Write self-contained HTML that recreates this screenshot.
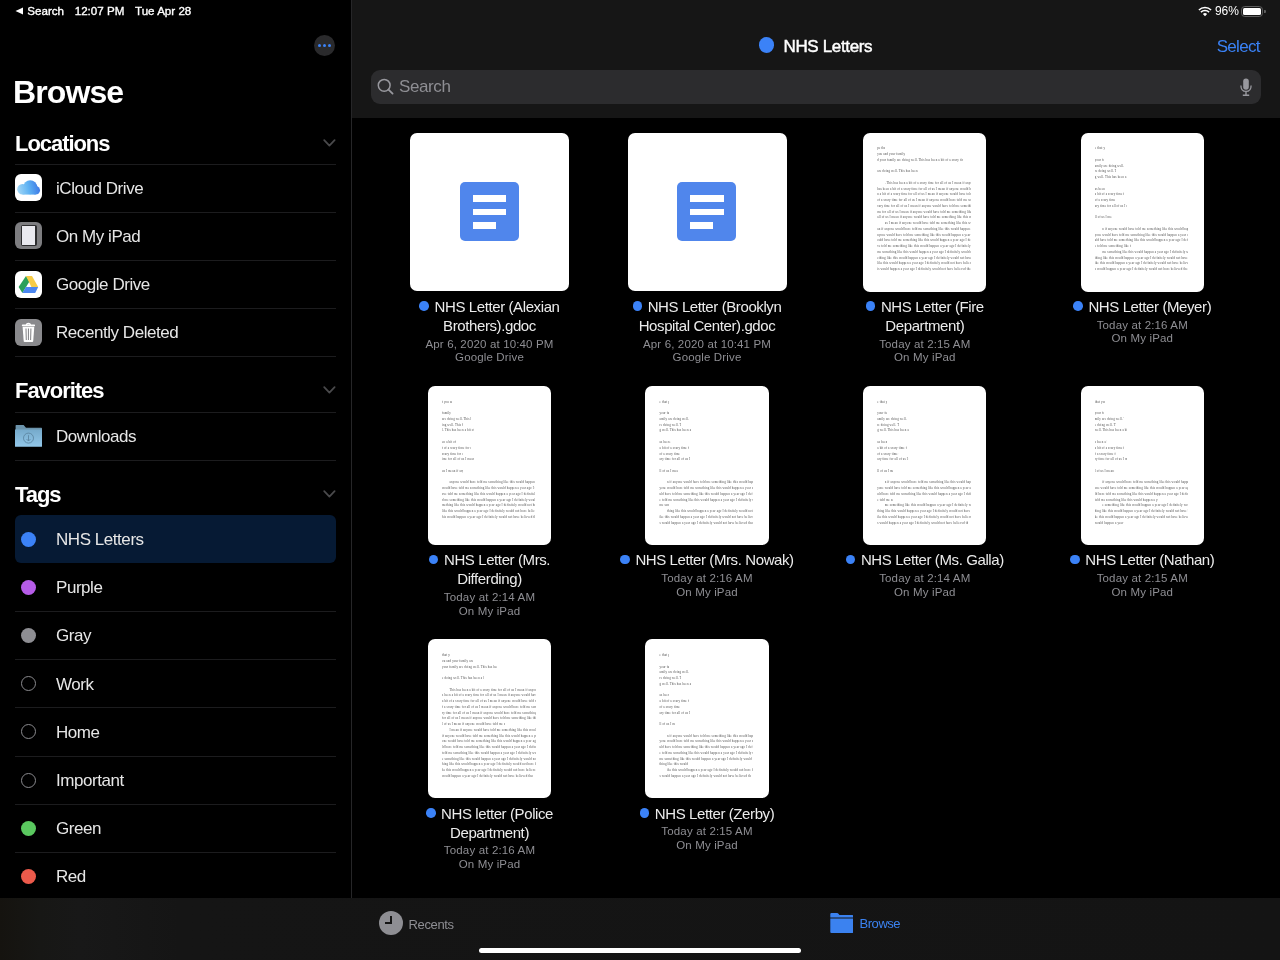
<!DOCTYPE html>
<html><head><meta charset="utf-8"><style>
*{margin:0;padding:0;box-sizing:border-box}
html,body{width:1280px;height:960px;overflow:hidden;background:#000;font-family:"Liberation Sans",sans-serif;color:#fff}
div{position:absolute}
svg{display:block}
#root{left:0;top:0;width:1280px;height:960px;will-change:transform}
.t{white-space:nowrap;line-height:1}
#divider{left:351px;top:0;width:1px;height:898px;background:#262628}
#mainhdr{left:352px;top:0;width:928px;height:118px;background:#161616}
#tabbar{left:0;top:898px;width:1280px;height:62px;background:linear-gradient(90deg,#15130f 0px,#171715 40px,#181818 80px,#151515 180px,#141414 1280px)}
.sep{left:15px;width:321px;height:1px;background:#1c1c1e}
.row{left:56px;font-size:17px;letter-spacing:-0.45px;color:#e6e6e6}
.ico{left:15px;width:27px;height:27px;border-radius:6px;overflow:hidden}
.dot{left:21px;width:15px;height:15px;border-radius:50%}
.ring{left:21px;width:15px;height:15px;border-radius:50%;border:1.3px solid #8a8a8e}
.sec{left:15px;font-size:22px;font-weight:bold;letter-spacing:-1.05px}
.chev{left:322px;width:15px;height:9px}
.thumb{background:#fff;border-radius:7px;overflow:hidden}
.ln{height:5px;overflow:hidden;white-space:nowrap;font-family:'Liberation Serif',serif;font-size:3.1px;line-height:5px;color:#505050;letter-spacing:0.15px}
.lbl{font-size:15px;letter-spacing:-0.4px;color:#ebebeb;text-align:center}
.sub{font-size:11.5px;letter-spacing:0.15px;color:#8e8e93;text-align:center}
</style></head><body><div id="root">
<div class="t" style="left:15px;top:7px;width:9px;height:8px"><svg width="9" height="8"><path d="M0.5 4 L8 0.5 L8 7.5Z" fill="#fff"/></svg></div>
<div class="t" style="left:27.3px;top:5.08px;font-size:11.6px;letter-spacing:0px;-webkit-text-stroke:0.35px #fff">Search</div>
<div class="t" style="left:74.7px;top:5.08px;font-size:11.6px;letter-spacing:0px;-webkit-text-stroke:0.35px #fff">12:07 PM</div>
<div class="t" style="left:135px;top:5.08px;font-size:11.6px;letter-spacing:0px;-webkit-text-stroke:0.35px #fff">Tue Apr 28</div>
<div style="left:314px;top:35px;width:21px;height:21px;border-radius:50%;background:#2a2a2c"></div>
<div style="left:317.9px;top:44.1px;width:3.4px;height:3.4px;border-radius:50%;background:#3b82f6"></div>
<div style="left:322.9px;top:44.1px;width:3.4px;height:3.4px;border-radius:50%;background:#3b82f6"></div>
<div style="left:327.9px;top:44.1px;width:3.4px;height:3.4px;border-radius:50%;background:#3b82f6"></div>
<div class="t" style="left:13px;top:75.91px;font-size:32px;font-weight:bold;letter-spacing:-0.9px">Browse</div>
<div class="t sec" style="top:132.98px">Locations</div>
<div class="chev" style="top:139.2px"><svg width="15" height="9"><path d="M2.2 1.2 L7.4 6.6 L12.6 1.2" stroke="#4a4a4c" stroke-width="1.7" fill="none" stroke-linecap="round" stroke-linejoin="round"/></svg></div>
<div class="sep" style="top:164px"></div>
<div class="sep" style="top:212px"></div>
<div class="sep" style="top:260px"></div>
<div class="sep" style="top:308px"></div>
<div class="sep" style="top:356px"></div>
<div class="ico" style="top:174px;background:#fff"><svg width="27" height="27" viewBox="0 0 27 27"><defs><linearGradient id="cg" gradientUnits="userSpaceOnUse" x1="2" y1="17" x2="25.5" y2="12"><stop offset="0" stop-color="#a6d9f6"/><stop offset="0.5" stop-color="#5eb2f3"/><stop offset="1" stop-color="#3a72e4"/></linearGradient></defs><g fill="url(#cg)"><circle cx="7.5" cy="15.2" r="5.3"/><circle cx="15.2" cy="13.3" r="7"/><circle cx="20.7" cy="16.3" r="4.3"/><rect x="7.5" y="15" width="13.2" height="5.6"/></g></svg></div>
<div class="t row" style="top:179.81px">iCloud Drive</div>
<div class="ico" style="top:222px;background:#7d7d80"><div style="left:5.5px;top:3px;width:16px;height:21px;background:#2c2c2e;border-radius:2px"></div><div style="left:7px;top:4.4px;width:13px;height:18.2px;background:#e9e9ef"></div></div>
<div class="t row" style="top:227.81px">On My iPad</div>
<div class="ico" style="top:271px;background:#fff"><svg width="27" height="27" viewBox="0 0 27 27"><path d="M11 5 L14.4 10.6 L7.4 21.9 L3.6 16.1 Z" fill="#2aa05a"/><path d="M11 5 L17 5 L23.2 16.1 L16.4 16.1 Z" fill="#f7cc47"/><path d="M7.4 21.9 L10.8 16.1 L23.2 16.1 L20.2 21.9 Z" fill="#4b86f0"/></svg></div>
<div class="t row" style="top:275.81px">Google Drive</div>
<div class="ico" style="top:319px;background:#8a8a8d"><svg width="27" height="27" viewBox="0 0 27 27"><path d="M7.6 6.4 H19.3" stroke="#fff" stroke-width="1.6" stroke-linecap="round"/><path d="M11.3 6.2 C11.5 4.9 12.3 4.5 13.4 4.5 C14.5 4.5 15.3 4.9 15.5 6.2" stroke="#fff" stroke-width="1.3" fill="none"/><path d="M7.6 7.7 L19.3 7.7 L18.2 22.3 C18.15 22.8 17.8 23.1 17.3 23.1 L9.6 23.1 C9.1 23.1 8.75 22.8 8.7 22.3 Z" fill="#fff"/><path d="M11.0 9.6 L11.3 21.1 M13.45 9.6 V21.1 M15.9 9.6 L15.6 21.1" stroke="#8a8a8d" stroke-width="1.1"/></svg></div>
<div class="t row" style="top:323.81px">Recently Deleted</div>
<div class="t sec" style="top:380.18px">Favorites</div>
<div class="chev" style="top:386.4px"><svg width="15" height="9"><path d="M2.2 1.2 L7.4 6.6 L12.6 1.2" stroke="#4a4a4c" stroke-width="1.7" fill="none" stroke-linecap="round" stroke-linejoin="round"/></svg></div>
<div class="sep" style="top:412px"></div>
<div class="sep" style="top:460px"></div>
<div class="ico" style="top:424px;height:23px;border-radius:0"><svg width="27" height="23" viewBox="0 0 27 23"><defs><linearGradient id="fg" x1="0" y1="0" x2="0" y2="1"><stop offset="0" stop-color="#76aacb"/><stop offset="1" stop-color="#93c8ea"/></linearGradient></defs><path d="M0.6 1.6 Q0.6 1 1.2 1 L8.6 1 L11 3.8 L26.4 3.8 Q27 3.8 27 4.4 L27 8 L0.6 8 Z" fill="#6b93ab"/><path d="M0 5.6 L27 5.6 L27 22.3 Q27 22.8 26.4 22.8 L0.6 22.8 Q0 22.8 0 22.3 Z" fill="url(#fg)"/><circle cx="13.5" cy="14.1" r="5" stroke="#5c87a3" stroke-width="0.9" fill="none"/><path d="M13.5 11.2 V17 M11.6 15.1 L13.5 17 L15.4 15.1" stroke="#5c87a3" stroke-width="0.9" fill="none"/></svg></div>
<div class="t row" style="top:427.81px">Downloads</div>
<div class="t sec" style="top:483.58px">Tags</div>
<div class="chev" style="top:489.8px"><svg width="15" height="9"><path d="M2.2 1.2 L7.4 6.6 L12.6 1.2" stroke="#4a4a4c" stroke-width="1.7" fill="none" stroke-linecap="round" stroke-linejoin="round"/></svg></div>
<div style="left:15px;top:515px;width:321px;height:48px;border-radius:6px;background:#061a34"></div>
<div class="sep" style="top:611px"></div>
<div class="sep" style="top:659px"></div>
<div class="sep" style="top:707px"></div>
<div class="sep" style="top:756px"></div>
<div class="sep" style="top:804px"></div>
<div class="sep" style="top:852px"></div>
<div class="dot" style="top:531.5px;background:#3b82f7"></div>
<div class="t row" style="top:531.01px">NHS Letters</div>
<div class="dot" style="top:579.7px;background:#b65ce8"></div>
<div class="t row" style="top:579.21px">Purple</div>
<div class="dot" style="top:627.9px;background:#8e8e93"></div>
<div class="t row" style="top:627.41px">Gray</div>
<div class="ring" style="top:676.1px"></div>
<div class="t row" style="top:675.61px">Work</div>
<div class="ring" style="top:724.3px"></div>
<div class="t row" style="top:723.81px">Home</div>
<div class="ring" style="top:772.5px"></div>
<div class="t row" style="top:772.01px">Important</div>
<div class="dot" style="top:820.7px;background:#5ac85f"></div>
<div class="t row" style="top:820.21px">Green</div>
<div class="dot" style="top:868.9px;background:#ec5a4b"></div>
<div class="t row" style="top:868.41px">Red</div>
<div id="divider"></div>
<div id="mainhdr"></div>
<div style="left:1198px;top:6px;width:14px;height:11px"><svg width="14" height="11" viewBox="0 0 14 11"><path d="M7 10.3 L4.9 8.1 A3 3 0 0 1 9.1 8.1 Z" fill="#fff"/><path d="M2.9 6.1 A5.8 5.8 0 0 1 11.1 6.1" stroke="#fff" stroke-width="1.5" fill="none"/><path d="M0.9 4 A8.6 8.6 0 0 1 13.1 4" stroke="#fff" stroke-width="1.5" fill="none"/></svg></div>
<div class="t" style="left:1215px;top:4.64px;font-size:12px;letter-spacing:-0.1px">96%</div>
<div style="left:1241.3px;top:5.5px;width:22.2px;height:11.5px;border:1.4px solid #5e5e5e;border-radius:3.8px"></div>
<div style="left:1243.2px;top:7.6px;width:18px;height:7.2px;background:#fff;border-radius:1.5px"></div>
<div style="left:1264px;top:9.5px;width:2.2px;height:3.8px;background:#5e5e5e;border-radius:0 1px 1px 0"></div>
<div style="left:759px;top:37.3px;width:15.3px;height:15.3px;border-radius:50%;background:#3b82f7"></div>
<div class="t" style="left:783.5px;top:37.91px;font-size:17px;letter-spacing:-0.35px;-webkit-text-stroke:0.45px #fff">NHS Letters</div>
<div class="t" style="left:1216.7px;top:38.01px;font-size:17px;letter-spacing:-0.7px;color:#3a82f6">Select</div>
<div style="left:371px;top:70px;width:890px;height:34px;border-radius:9px;background:#2c2c2e"></div>
<div style="left:376px;top:77px;width:18px;height:18px"><svg width="18" height="18" viewBox="0 0 18 18"><circle cx="8.2" cy="8.3" r="5.9" stroke="#98989e" stroke-width="1.5" fill="none"/><path d="M12.5 12.6 L16.6 16.6" stroke="#98989e" stroke-width="1.8" stroke-linecap="round"/></svg></div>
<div class="t" style="left:399px;top:77.61px;font-size:17px;letter-spacing:-0.4px;color:#8e8e93">Search</div>
<div style="left:1238px;top:77px;width:16px;height:20px"><svg width="16" height="20" viewBox="0 0 16 20"><rect x="5.2" y="1.6" width="5.6" height="11.2" rx="2.8" fill="#98989e"/><path d="M2.9 8.4 Q2.9 14.4 8 14.4 Q13.1 14.4 13.1 8.4" stroke="#98989e" stroke-width="1.3" fill="none"/><path d="M8 14.4 V17.8 M4.8 18.2 H11.2" stroke="#98989e" stroke-width="1.4"/></svg></div>
<div style="left:352px;top:118px;width:928px;height:780px;background:#000"></div>
<div class="thumb" style="left:410.0px;top:132.5px;width:159px;height:158.5px"><div style="left:49.6px;top:49.4px;width:59.4px;height:59.4px;border-radius:5px;background:#5086ec"></div><div style="left:62.6px;top:62.5px;width:33.7px;height:6.8px;background:#fff"></div><div style="left:62.6px;top:76.2px;width:33.7px;height:6.8px;background:#fff"></div><div style="left:62.6px;top:89.3px;width:23.4px;height:6.8px;background:#fff"></div></div>
<div class="t lbl" style="left:384.5px;top:298.80px;width:210px"><span style="display:inline-block;width:9.6px;height:9.6px;border-radius:50%;background:#3b82f7;margin-right:5.5px;vertical-align:0.8px"></span>NHS Letter (Alexian</div>
<div class="t lbl" style="left:384.5px;top:317.80px;width:210px">Brothers).gdoc</div>
<div class="t sub" style="left:384.5px;top:338.67px;width:210px">Apr 6, 2020 at 10:40 PM</div>
<div class="t sub" style="left:384.5px;top:352.27px;width:210px">Google Drive</div>
<div class="thumb" style="left:627.5px;top:132.5px;width:159px;height:158.5px"><div style="left:49.6px;top:49.4px;width:59.4px;height:59.4px;border-radius:5px;background:#5086ec"></div><div style="left:62.6px;top:62.5px;width:33.7px;height:6.8px;background:#fff"></div><div style="left:62.6px;top:76.2px;width:33.7px;height:6.8px;background:#fff"></div><div style="left:62.6px;top:89.3px;width:23.4px;height:6.8px;background:#fff"></div></div>
<div class="t lbl" style="left:602.0px;top:298.80px;width:210px"><span style="display:inline-block;width:9.6px;height:9.6px;border-radius:50%;background:#3b82f7;margin-right:5.5px;vertical-align:0.8px"></span>NHS Letter (Brooklyn</div>
<div class="t lbl" style="left:602.0px;top:317.80px;width:210px">Hospital Center).gdoc</div>
<div class="t sub" style="left:602.0px;top:338.67px;width:210px">Apr 6, 2020 at 10:41 PM</div>
<div class="t sub" style="left:602.0px;top:352.27px;width:210px">Google Drive</div>
<div class="thumb" style="left:863.0px;top:132.5px;width:123.4px;height:159px"><div class="ln" style="left:14.2px;top:13.9px;width:8.0px">pe that you and your family are doing well. This has been a bit of a scary time for all of us I mean if anyone would have told me something like this would happen a year ago I definitely would not have believed them. However I think that there has been some level of good to come out of this with this whole quarantine thing we have all been given time to reflect on our lives and to spend time with our families and to really think about what matters</div><div class="ln" style="left:14.2px;top:19.6px;width:29.0px"> you and your family are doing well. This has been a bit of a scary time for all of us I mean if anyone would have told me something like this would happen a year ago I definitely would not have believed them. However I think that there has been some level of good to come out of this with this whole quarantine thing we have all been given time to reflect on our lives and to spend time with our families and to really think about what matters</div><div class="ln" style="left:14.2px;top:25.4px;width:86.0px">d your family are doing well. This has been a bit of a scary time for all of us I mean if anyone would have told me something like this would happen a year ago I definitely would not have believed them. However I think that there has been some level of good to come out of this with this whole quarantine thing we have all been given time to reflect on our lives and to spend time with our families and to really think about what matters</div><div class="ln" style="left:14.2px;top:36.9px;width:40.5px">are doing well. This has been a bit of a scary time for all of us I mean if anyone would have told me something like this would happen a year ago I definitely would not have believed them. However I think that there has been some level of good to come out of this with this whole quarantine thing we have all been given time to reflect on our lives and to spend time with our families and to really think about what matters</div><div class="ln" style="left:21.7px;top:48.4px;width:86.5px">. This has been a bit of a scary time for all of us I mean if anyone would have told me something like this would happen a year ago I definitely would not have believed them. However I think that there has been some level of good to come out of this with this whole quarantine thing we have all been given time to reflect on our lives and to spend time with our families and to really think about what matters</div><div class="ln" style="left:14.2px;top:54.1px;width:94.0px">has been a bit of a scary time for all of us I mean if anyone would have told me something like this would happen a year ago I definitely would not have believed them. However I think that there has been some level of good to come out of this with this whole quarantine thing we have all been given time to reflect on our lives and to spend time with our families and to really think about what matters</div><div class="ln" style="left:14.2px;top:59.9px;width:94.0px">n a bit of a scary time for all of us I mean if anyone would have told me something like this would happen a year ago I definitely would not have believed them. However I think that there has been some level of good to come out of this with this whole quarantine thing we have all been given time to reflect on our lives and to spend time with our families and to really think about what matters</div><div class="ln" style="left:14.2px;top:65.7px;width:94.0px"> of a scary time for all of us I mean if anyone would have told me something like this would happen a year ago I definitely would not have believed them. However I think that there has been some level of good to come out of this with this whole quarantine thing we have all been given time to reflect on our lives and to spend time with our families and to really think about what matters</div><div class="ln" style="left:14.2px;top:71.4px;width:94.0px">cary time for all of us I mean if anyone would have told me something like this would happen a year ago I definitely would not have believed them. However I think that there has been some level of good to come out of this with this whole quarantine thing we have all been given time to reflect on our lives and to spend time with our families and to really think about what matters</div><div class="ln" style="left:14.2px;top:77.2px;width:94.0px">me for all of us I mean if anyone would have told me something like this would happen a year ago I definitely would not have believed them. However I think that there has been some level of good to come out of this with this whole quarantine thing we have all been given time to reflect on our lives and to spend time with our families and to really think about what matters</div><div class="ln" style="left:14.2px;top:82.9px;width:94.0px">all of us I mean if anyone would have told me something like this would happen a year ago I definitely would not have believed them. However I think that there has been some level of good to come out of this with this whole quarantine thing we have all been given time to reflect on our lives and to spend time with our families and to really think about what matters</div><div class="ln" style="left:21.7px;top:88.7px;width:86.5px">us I mean if anyone would have told me something like this would happen a year ago I definitely would not have believed them. However I think that there has been some level of good to come out of this with this whole quarantine thing we have all been given time to reflect on our lives and to spend time with our families and to really think about what matters</div><div class="ln" style="left:14.2px;top:94.4px;width:94.0px">an if anyone would have told me something like this would happen a year ago I definitely would not have believed them. However I think that there has been some level of good to come out of this with this whole quarantine thing we have all been given time to reflect on our lives and to spend time with our families and to really think about what matters</div><div class="ln" style="left:14.2px;top:100.2px;width:94.0px">nyone would have told me something like this would happen a year ago I definitely would not have believed them. However I think that there has been some level of good to come out of this with this whole quarantine thing we have all been given time to reflect on our lives and to spend time with our families and to really think about what matters</div><div class="ln" style="left:14.2px;top:105.9px;width:94.0px">ould have told me something like this would happen a year ago I definitely would not have believed them. However I think that there has been some level of good to come out of this with this whole quarantine thing we have all been given time to reflect on our lives and to spend time with our families and to really think about what matters</div><div class="ln" style="left:14.2px;top:111.7px;width:94.0px">ve told me something like this would happen a year ago I definitely would not have believed them. However I think that there has been some level of good to come out of this with this whole quarantine thing we have all been given time to reflect on our lives and to spend time with our families and to really think about what matters</div><div class="ln" style="left:14.2px;top:117.4px;width:94.0px"> me something like this would happen a year ago I definitely would not have believed them. However I think that there has been some level of good to come out of this with this whole quarantine thing we have all been given time to reflect on our lives and to spend time with our families and to really think about what matters</div><div class="ln" style="left:14.2px;top:123.2px;width:94.0px">ething like this would happen a year ago I definitely would not have believed them. However I think that there has been some level of good to come out of this with this whole quarantine thing we have all been given time to reflect on our lives and to spend time with our families and to really think about what matters</div><div class="ln" style="left:14.2px;top:128.9px;width:94.0px">like this would happen a year ago I definitely would not have believed them. However I think that there has been some level of good to come out of this with this whole quarantine thing we have all been given time to reflect on our lives and to spend time with our families and to really think about what matters</div><div class="ln" style="left:14.2px;top:134.7px;width:94.0px">is would happen a year ago I definitely would not have believed them. However I think that there has been some level of good to come out of this with this whole quarantine thing we have all been given time to reflect on our lives and to spend time with our families and to really think about what matters</div></div>
<div class="t lbl" style="left:819.8px;top:298.80px;width:210px"><span style="display:inline-block;width:9.6px;height:9.6px;border-radius:50%;background:#3b82f7;margin-right:5.5px;vertical-align:0.8px"></span>NHS Letter (Fire</div>
<div class="t lbl" style="left:819.8px;top:317.80px;width:210px">Department)</div>
<div class="t sub" style="left:819.8px;top:338.67px;width:210px">Today at 2:15 AM</div>
<div class="t sub" style="left:819.8px;top:352.27px;width:210px">On My iPad</div>
<div class="thumb" style="left:1080.6px;top:132.5px;width:123.4px;height:159px"><div class="ln" style="left:14.2px;top:13.9px;width:10.0px">e that you and your family are doing well. This has been a bit of a scary time for all of us I mean if anyone would have told me something like this would happen a year ago I definitely would not have believed them. However I think that there has been some level of good to come out of this with this whole quarantine thing we have all been given time to reflect on our lives and to spend time with our families and to really think about what matters</div><div class="ln" style="left:14.2px;top:25.4px;width:9.5px"> your family are doing well. This has been a bit of a scary time for all of us I mean if anyone would have told me something like this would happen a year ago I definitely would not have believed them. However I think that there has been some level of good to come out of this with this whole quarantine thing we have all been given time to reflect on our lives and to spend time with our families and to really think about what matters</div><div class="ln" style="left:14.2px;top:31.1px;width:29.5px">amily are doing well. This has been a bit of a scary time for all of us I mean if anyone would have told me something like this would happen a year ago I definitely would not have believed them. However I think that there has been some level of good to come out of this with this whole quarantine thing we have all been given time to reflect on our lives and to spend time with our families and to really think about what matters</div><div class="ln" style="left:14.2px;top:36.9px;width:21.5px">re doing well. This has been a bit of a scary time for all of us I mean if anyone would have told me something like this would happen a year ago I definitely would not have believed them. However I think that there has been some level of good to come out of this with this whole quarantine thing we have all been given time to reflect on our lives and to spend time with our families and to really think about what matters</div><div class="ln" style="left:14.2px;top:42.6px;width:32.0px">g well. This has been a bit of a scary time for all of us I mean if anyone would have told me something like this would happen a year ago I definitely would not have believed them. However I think that there has been some level of good to come out of this with this whole quarantine thing we have all been given time to reflect on our lives and to spend time with our families and to really think about what matters</div><div class="ln" style="left:14.2px;top:54.1px;width:11.0px">as been a bit of a scary time for all of us I mean if anyone would have told me something like this would happen a year ago I definitely would not have believed them. However I think that there has been some level of good to come out of this with this whole quarantine thing we have all been given time to reflect on our lives and to spend time with our families and to really think about what matters</div><div class="ln" style="left:14.2px;top:59.9px;width:29.5px"> a bit of a scary time for all of us I mean if anyone would have told me something like this would happen a year ago I definitely would not have believed them. However I think that there has been some level of good to come out of this with this whole quarantine thing we have all been given time to reflect on our lives and to spend time with our families and to really think about what matters</div><div class="ln" style="left:14.2px;top:65.7px;width:21.5px">of a scary time for all of us I mean if anyone would have told me something like this would happen a year ago I definitely would not have believed them. However I think that there has been some level of good to come out of this with this whole quarantine thing we have all been given time to reflect on our lives and to spend time with our families and to really think about what matters</div><div class="ln" style="left:14.2px;top:71.4px;width:32.0px">ary time for all of us I mean if anyone would have told me something like this would happen a year ago I definitely would not have believed them. However I think that there has been some level of good to come out of this with this whole quarantine thing we have all been given time to reflect on our lives and to spend time with our families and to really think about what matters</div><div class="ln" style="left:14.2px;top:82.9px;width:17.0px">ll of us I mean if anyone would have told me something like this would happen a year ago I definitely would not have believed them. However I think that there has been some level of good to come out of this with this whole quarantine thing we have all been given time to reflect on our lives and to spend time with our families and to really think about what matters</div><div class="ln" style="left:21.7px;top:94.4px;width:86.0px">n if anyone would have told me something like this would happen a year ago I definitely would not have believed them. However I think that there has been some level of good to come out of this with this whole quarantine thing we have all been given time to reflect on our lives and to spend time with our families and to really think about what matters</div><div class="ln" style="left:14.2px;top:100.2px;width:93.5px">yone would have told me something like this would happen a year ago I definitely would not have believed them. However I think that there has been some level of good to come out of this with this whole quarantine thing we have all been given time to reflect on our lives and to spend time with our families and to really think about what matters</div><div class="ln" style="left:14.2px;top:105.9px;width:93.5px">uld have told me something like this would happen a year ago I definitely would not have believed them. However I think that there has been some level of good to come out of this with this whole quarantine thing we have all been given time to reflect on our lives and to spend time with our families and to really think about what matters</div><div class="ln" style="left:14.2px;top:111.7px;width:36.5px">e told me something like this would happen a year ago I definitely would not have believed them. However I think that there has been some level of good to come out of this with this whole quarantine thing we have all been given time to reflect on our lives and to spend time with our families and to really think about what matters</div><div class="ln" style="left:21.7px;top:117.4px;width:86.0px">me something like this would happen a year ago I definitely would not have believed them. However I think that there has been some level of good to come out of this with this whole quarantine thing we have all been given time to reflect on our lives and to spend time with our families and to really think about what matters</div><div class="ln" style="left:14.2px;top:123.2px;width:93.5px">thing like this would happen a year ago I definitely would not have believed them. However I think that there has been some level of good to come out of this with this whole quarantine thing we have all been given time to reflect on our lives and to spend time with our families and to really think about what matters</div><div class="ln" style="left:14.2px;top:128.9px;width:93.5px">ike this would happen a year ago I definitely would not have believed them. However I think that there has been some level of good to come out of this with this whole quarantine thing we have all been given time to reflect on our lives and to spend time with our families and to really think about what matters</div><div class="ln" style="left:14.2px;top:134.7px;width:93.5px">s would happen a year ago I definitely would not have believed them. However I think that there has been some level of good to come out of this with this whole quarantine thing we have all been given time to reflect on our lives and to spend time with our families and to really think about what matters</div></div>
<div class="t lbl" style="left:1037.3px;top:298.80px;width:210px"><span style="display:inline-block;width:9.6px;height:9.6px;border-radius:50%;background:#3b82f7;margin-right:5.5px;vertical-align:0.8px"></span>NHS Letter (Meyer)</div>
<div class="t sub" style="left:1037.3px;top:319.67px;width:210px">Today at 2:16 AM</div>
<div class="t sub" style="left:1037.3px;top:333.27px;width:210px">On My iPad</div>
<div class="thumb" style="left:427.8px;top:385.9px;width:123.4px;height:159px"><div class="ln" style="left:14.2px;top:13.9px;width:10.0px">t you and your family are doing well. This has been a bit of a scary time for all of us I mean if anyone would have told me something like this would happen a year ago I definitely would not have believed them. However I think that there has been some level of good to come out of this with this whole quarantine thing we have all been given time to reflect on our lives and to spend time with our families and to really think about what matters</div><div class="ln" style="left:14.2px;top:25.4px;width:9.5px"> family are doing well. This has been a bit of a scary time for all of us I mean if anyone would have told me something like this would happen a year ago I definitely would not have believed them. However I think that there has been some level of good to come out of this with this whole quarantine thing we have all been given time to reflect on our lives and to spend time with our families and to really think about what matters</div><div class="ln" style="left:14.2px;top:31.1px;width:29.5px"> are doing well. This has been a bit of a scary time for all of us I mean if anyone would have told me something like this would happen a year ago I definitely would not have believed them. However I think that there has been some level of good to come out of this with this whole quarantine thing we have all been given time to reflect on our lives and to spend time with our families and to really think about what matters</div><div class="ln" style="left:14.2px;top:36.9px;width:21.5px">ing well. This has been a bit of a scary time for all of us I mean if anyone would have told me something like this would happen a year ago I definitely would not have believed them. However I think that there has been some level of good to come out of this with this whole quarantine thing we have all been given time to reflect on our lives and to spend time with our families and to really think about what matters</div><div class="ln" style="left:14.2px;top:42.6px;width:32.0px">l. This has been a bit of a scary time for all of us I mean if anyone would have told me something like this would happen a year ago I definitely would not have believed them. However I think that there has been some level of good to come out of this with this whole quarantine thing we have all been given time to reflect on our lives and to spend time with our families and to really think about what matters</div><div class="ln" style="left:14.2px;top:54.1px;width:14.0px">en a bit of a scary time for all of us I mean if anyone would have told me something like this would happen a year ago I definitely would not have believed them. However I think that there has been some level of good to come out of this with this whole quarantine thing we have all been given time to reflect on our lives and to spend time with our families and to really think about what matters</div><div class="ln" style="left:14.2px;top:59.9px;width:29.5px">t of a scary time for all of us I mean if anyone would have told me something like this would happen a year ago I definitely would not have believed them. However I think that there has been some level of good to come out of this with this whole quarantine thing we have all been given time to reflect on our lives and to spend time with our families and to really think about what matters</div><div class="ln" style="left:14.2px;top:65.7px;width:21.5px">scary time for all of us I mean if anyone would have told me something like this would happen a year ago I definitely would not have believed them. However I think that there has been some level of good to come out of this with this whole quarantine thing we have all been given time to reflect on our lives and to spend time with our families and to really think about what matters</div><div class="ln" style="left:14.2px;top:71.4px;width:32.0px">ime for all of us I mean if anyone would have told me something like this would happen a year ago I definitely would not have believed them. However I think that there has been some level of good to come out of this with this whole quarantine thing we have all been given time to reflect on our lives and to spend time with our families and to really think about what matters</div><div class="ln" style="left:14.2px;top:82.9px;width:21.0px"> us I mean if anyone would have told me something like this would happen a year ago I definitely would not have believed them. However I think that there has been some level of good to come out of this with this whole quarantine thing we have all been given time to reflect on our lives and to spend time with our families and to really think about what matters</div><div class="ln" style="left:21.7px;top:94.4px;width:86.0px">anyone would have told me something like this would happen a year ago I definitely would not have believed them. However I think that there has been some level of good to come out of this with this whole quarantine thing we have all been given time to reflect on our lives and to spend time with our families and to really think about what matters</div><div class="ln" style="left:14.2px;top:100.2px;width:93.5px">would have told me something like this would happen a year ago I definitely would not have believed them. However I think that there has been some level of good to come out of this with this whole quarantine thing we have all been given time to reflect on our lives and to spend time with our families and to really think about what matters</div><div class="ln" style="left:14.2px;top:105.9px;width:93.5px">ave told me something like this would happen a year ago I definitely would not have believed them. However I think that there has been some level of good to come out of this with this whole quarantine thing we have all been given time to reflect on our lives and to spend time with our families and to really think about what matters</div><div class="ln" style="left:14.2px;top:111.7px;width:93.5px">d me something like this would happen a year ago I definitely would not have believed them. However I think that there has been some level of good to come out of this with this whole quarantine thing we have all been given time to reflect on our lives and to spend time with our families and to really think about what matters</div><div class="ln" style="left:14.2px;top:117.4px;width:93.5px">mething like this would happen a year ago I definitely would not have believed them. However I think that there has been some level of good to come out of this with this whole quarantine thing we have all been given time to reflect on our lives and to spend time with our families and to really think about what matters</div><div class="ln" style="left:14.2px;top:123.2px;width:93.5px"> like this would happen a year ago I definitely would not have believed them. However I think that there has been some level of good to come out of this with this whole quarantine thing we have all been given time to reflect on our lives and to spend time with our families and to really think about what matters</div><div class="ln" style="left:14.2px;top:128.9px;width:93.5px">his would happen a year ago I definitely would not have believed them. However I think that there has been some level of good to come out of this with this whole quarantine thing we have all been given time to reflect on our lives and to spend time with our families and to really think about what matters</div></div>
<div class="t lbl" style="left:384.5px;top:552.20px;width:210px"><span style="display:inline-block;width:9.6px;height:9.6px;border-radius:50%;background:#3b82f7;margin-right:5.5px;vertical-align:0.8px"></span>NHS Letter (Mrs.</div>
<div class="t lbl" style="left:384.5px;top:571.20px;width:210px">Differding)</div>
<div class="t sub" style="left:384.5px;top:592.07px;width:210px">Today at 2:14 AM</div>
<div class="t sub" style="left:384.5px;top:605.67px;width:210px">On My iPad</div>
<div class="thumb" style="left:645.3px;top:385.9px;width:123.4px;height:159px"><div class="ln" style="left:14.2px;top:13.9px;width:10.0px">e that you and your family are doing well. This has been a bit of a scary time for all of us I mean if anyone would have told me something like this would happen a year ago I definitely would not have believed them. However I think that there has been some level of good to come out of this with this whole quarantine thing we have all been given time to reflect on our lives and to spend time with our families and to really think about what matters</div><div class="ln" style="left:14.2px;top:25.4px;width:9.5px"> your family are doing well. This has been a bit of a scary time for all of us I mean if anyone would have told me something like this would happen a year ago I definitely would not have believed them. However I think that there has been some level of good to come out of this with this whole quarantine thing we have all been given time to reflect on our lives and to spend time with our families and to really think about what matters</div><div class="ln" style="left:14.2px;top:31.1px;width:29.5px">amily are doing well. This has been a bit of a scary time for all of us I mean if anyone would have told me something like this would happen a year ago I definitely would not have believed them. However I think that there has been some level of good to come out of this with this whole quarantine thing we have all been given time to reflect on our lives and to spend time with our families and to really think about what matters</div><div class="ln" style="left:14.2px;top:36.9px;width:21.5px">re doing well. This has been a bit of a scary time for all of us I mean if anyone would have told me something like this would happen a year ago I definitely would not have believed them. However I think that there has been some level of good to come out of this with this whole quarantine thing we have all been given time to reflect on our lives and to spend time with our families and to really think about what matters</div><div class="ln" style="left:14.2px;top:42.6px;width:32.0px">g well. This has been a bit of a scary time for all of us I mean if anyone would have told me something like this would happen a year ago I definitely would not have believed them. However I think that there has been some level of good to come out of this with this whole quarantine thing we have all been given time to reflect on our lives and to spend time with our families and to really think about what matters</div><div class="ln" style="left:14.2px;top:54.1px;width:12.0px">as been a bit of a scary time for all of us I mean if anyone would have told me something like this would happen a year ago I definitely would not have believed them. However I think that there has been some level of good to come out of this with this whole quarantine thing we have all been given time to reflect on our lives and to spend time with our families and to really think about what matters</div><div class="ln" style="left:14.2px;top:59.9px;width:29.5px"> a bit of a scary time for all of us I mean if anyone would have told me something like this would happen a year ago I definitely would not have believed them. However I think that there has been some level of good to come out of this with this whole quarantine thing we have all been given time to reflect on our lives and to spend time with our families and to really think about what matters</div><div class="ln" style="left:14.2px;top:65.7px;width:21.5px">of a scary time for all of us I mean if anyone would have told me something like this would happen a year ago I definitely would not have believed them. However I think that there has been some level of good to come out of this with this whole quarantine thing we have all been given time to reflect on our lives and to spend time with our families and to really think about what matters</div><div class="ln" style="left:14.2px;top:71.4px;width:32.0px">ary time for all of us I mean if anyone would have told me something like this would happen a year ago I definitely would not have believed them. However I think that there has been some level of good to come out of this with this whole quarantine thing we have all been given time to reflect on our lives and to spend time with our families and to really think about what matters</div><div class="ln" style="left:14.2px;top:82.9px;width:19.0px">ll of us I mean if anyone would have told me something like this would happen a year ago I definitely would not have believed them. However I think that there has been some level of good to come out of this with this whole quarantine thing we have all been given time to reflect on our lives and to spend time with our families and to really think about what matters</div><div class="ln" style="left:21.7px;top:94.4px;width:86.0px">n if anyone would have told me something like this would happen a year ago I definitely would not have believed them. However I think that there has been some level of good to come out of this with this whole quarantine thing we have all been given time to reflect on our lives and to spend time with our families and to really think about what matters</div><div class="ln" style="left:14.2px;top:100.2px;width:93.5px">yone would have told me something like this would happen a year ago I definitely would not have believed them. However I think that there has been some level of good to come out of this with this whole quarantine thing we have all been given time to reflect on our lives and to spend time with our families and to really think about what matters</div><div class="ln" style="left:14.2px;top:105.9px;width:93.5px">uld have told me something like this would happen a year ago I definitely would not have believed them. However I think that there has been some level of good to come out of this with this whole quarantine thing we have all been given time to reflect on our lives and to spend time with our families and to really think about what matters</div><div class="ln" style="left:14.2px;top:111.7px;width:93.5px">e told me something like this would happen a year ago I definitely would not have believed them. However I think that there has been some level of good to come out of this with this whole quarantine thing we have all been given time to reflect on our lives and to spend time with our families and to really think about what matters</div><div class="ln" style="left:14.2px;top:117.4px;width:9.5px">me something like this would happen a year ago I definitely would not have believed them. However I think that there has been some level of good to come out of this with this whole quarantine thing we have all been given time to reflect on our lives and to spend time with our families and to really think about what matters</div><div class="ln" style="left:21.7px;top:123.2px;width:86.0px">thing like this would happen a year ago I definitely would not have believed them. However I think that there has been some level of good to come out of this with this whole quarantine thing we have all been given time to reflect on our lives and to spend time with our families and to really think about what matters</div><div class="ln" style="left:14.2px;top:128.9px;width:93.5px">ike this would happen a year ago I definitely would not have believed them. However I think that there has been some level of good to come out of this with this whole quarantine thing we have all been given time to reflect on our lives and to spend time with our families and to really think about what matters</div><div class="ln" style="left:14.2px;top:134.7px;width:93.5px">s would happen a year ago I definitely would not have believed them. However I think that there has been some level of good to come out of this with this whole quarantine thing we have all been given time to reflect on our lives and to spend time with our families and to really think about what matters</div></div>
<div class="t lbl" style="left:602.0px;top:552.20px;width:210px"><span style="display:inline-block;width:9.6px;height:9.6px;border-radius:50%;background:#3b82f7;margin-right:5.5px;vertical-align:0.8px"></span>NHS Letter (Mrs. Nowak)</div>
<div class="t sub" style="left:602.0px;top:573.07px;width:210px">Today at 2:16 AM</div>
<div class="t sub" style="left:602.0px;top:586.67px;width:210px">On My iPad</div>
<div class="thumb" style="left:863.0px;top:385.9px;width:123.4px;height:159px"><div class="ln" style="left:14.2px;top:13.9px;width:10.0px">e that you and your family are doing well. This has been a bit of a scary time for all of us I mean if anyone would have told me something like this would happen a year ago I definitely would not have believed them. However I think that there has been some level of good to come out of this with this whole quarantine thing we have all been given time to reflect on our lives and to spend time with our families and to really think about what matters</div><div class="ln" style="left:14.2px;top:25.4px;width:9.5px"> your family are doing well. This has been a bit of a scary time for all of us I mean if anyone would have told me something like this would happen a year ago I definitely would not have believed them. However I think that there has been some level of good to come out of this with this whole quarantine thing we have all been given time to reflect on our lives and to spend time with our families and to really think about what matters</div><div class="ln" style="left:14.2px;top:31.1px;width:29.5px">amily are doing well. This has been a bit of a scary time for all of us I mean if anyone would have told me something like this would happen a year ago I definitely would not have believed them. However I think that there has been some level of good to come out of this with this whole quarantine thing we have all been given time to reflect on our lives and to spend time with our families and to really think about what matters</div><div class="ln" style="left:14.2px;top:36.9px;width:21.5px">re doing well. This has been a bit of a scary time for all of us I mean if anyone would have told me something like this would happen a year ago I definitely would not have believed them. However I think that there has been some level of good to come out of this with this whole quarantine thing we have all been given time to reflect on our lives and to spend time with our families and to really think about what matters</div><div class="ln" style="left:14.2px;top:42.6px;width:32.0px">g well. This has been a bit of a scary time for all of us I mean if anyone would have told me something like this would happen a year ago I definitely would not have believed them. However I think that there has been some level of good to come out of this with this whole quarantine thing we have all been given time to reflect on our lives and to spend time with our families and to really think about what matters</div><div class="ln" style="left:14.2px;top:54.1px;width:10.0px">as been a bit of a scary time for all of us I mean if anyone would have told me something like this would happen a year ago I definitely would not have believed them. However I think that there has been some level of good to come out of this with this whole quarantine thing we have all been given time to reflect on our lives and to spend time with our families and to really think about what matters</div><div class="ln" style="left:14.2px;top:59.9px;width:29.5px"> a bit of a scary time for all of us I mean if anyone would have told me something like this would happen a year ago I definitely would not have believed them. However I think that there has been some level of good to come out of this with this whole quarantine thing we have all been given time to reflect on our lives and to spend time with our families and to really think about what matters</div><div class="ln" style="left:14.2px;top:65.7px;width:21.5px">of a scary time for all of us I mean if anyone would have told me something like this would happen a year ago I definitely would not have believed them. However I think that there has been some level of good to come out of this with this whole quarantine thing we have all been given time to reflect on our lives and to spend time with our families and to really think about what matters</div><div class="ln" style="left:14.2px;top:71.4px;width:32.0px">ary time for all of us I mean if anyone would have told me something like this would happen a year ago I definitely would not have believed them. However I think that there has been some level of good to come out of this with this whole quarantine thing we have all been given time to reflect on our lives and to spend time with our families and to really think about what matters</div><div class="ln" style="left:14.2px;top:82.9px;width:16.0px">ll of us I mean if anyone would have told me something like this would happen a year ago I definitely would not have believed them. However I think that there has been some level of good to come out of this with this whole quarantine thing we have all been given time to reflect on our lives and to spend time with our families and to really think about what matters</div><div class="ln" style="left:21.7px;top:94.4px;width:86.0px">n if anyone would have told me something like this would happen a year ago I definitely would not have believed them. However I think that there has been some level of good to come out of this with this whole quarantine thing we have all been given time to reflect on our lives and to spend time with our families and to really think about what matters</div><div class="ln" style="left:14.2px;top:100.2px;width:93.5px">yone would have told me something like this would happen a year ago I definitely would not have believed them. However I think that there has been some level of good to come out of this with this whole quarantine thing we have all been given time to reflect on our lives and to spend time with our families and to really think about what matters</div><div class="ln" style="left:14.2px;top:105.9px;width:93.5px">uld have told me something like this would happen a year ago I definitely would not have believed them. However I think that there has been some level of good to come out of this with this whole quarantine thing we have all been given time to reflect on our lives and to spend time with our families and to really think about what matters</div><div class="ln" style="left:14.2px;top:111.7px;width:16.0px">e told me something like this would happen a year ago I definitely would not have believed them. However I think that there has been some level of good to come out of this with this whole quarantine thing we have all been given time to reflect on our lives and to spend time with our families and to really think about what matters</div><div class="ln" style="left:21.7px;top:117.4px;width:86.0px">me something like this would happen a year ago I definitely would not have believed them. However I think that there has been some level of good to come out of this with this whole quarantine thing we have all been given time to reflect on our lives and to spend time with our families and to really think about what matters</div><div class="ln" style="left:14.2px;top:123.2px;width:93.5px">thing like this would happen a year ago I definitely would not have believed them. However I think that there has been some level of good to come out of this with this whole quarantine thing we have all been given time to reflect on our lives and to spend time with our families and to really think about what matters</div><div class="ln" style="left:14.2px;top:128.9px;width:93.5px">ike this would happen a year ago I definitely would not have believed them. However I think that there has been some level of good to come out of this with this whole quarantine thing we have all been given time to reflect on our lives and to spend time with our families and to really think about what matters</div><div class="ln" style="left:14.2px;top:134.7px;width:91.0px">s would happen a year ago I definitely would not have believed them. However I think that there has been some level of good to come out of this with this whole quarantine thing we have all been given time to reflect on our lives and to spend time with our families and to really think about what matters</div></div>
<div class="t lbl" style="left:819.8px;top:552.20px;width:210px"><span style="display:inline-block;width:9.6px;height:9.6px;border-radius:50%;background:#3b82f7;margin-right:5.5px;vertical-align:0.8px"></span>NHS Letter (Ms. Galla)</div>
<div class="t sub" style="left:819.8px;top:573.07px;width:210px">Today at 2:14 AM</div>
<div class="t sub" style="left:819.8px;top:586.67px;width:210px">On My iPad</div>
<div class="thumb" style="left:1080.6px;top:385.9px;width:123.4px;height:159px"><div class="ln" style="left:14.2px;top:13.9px;width:10.0px"> that you and your family are doing well. This has been a bit of a scary time for all of us I mean if anyone would have told me something like this would happen a year ago I definitely would not have believed them. However I think that there has been some level of good to come out of this with this whole quarantine thing we have all been given time to reflect on our lives and to spend time with our families and to really think about what matters</div><div class="ln" style="left:14.2px;top:25.4px;width:9.5px">your family are doing well. This has been a bit of a scary time for all of us I mean if anyone would have told me something like this would happen a year ago I definitely would not have believed them. However I think that there has been some level of good to come out of this with this whole quarantine thing we have all been given time to reflect on our lives and to spend time with our families and to really think about what matters</div><div class="ln" style="left:14.2px;top:31.1px;width:29.5px">mily are doing well. This has been a bit of a scary time for all of us I mean if anyone would have told me something like this would happen a year ago I definitely would not have believed them. However I think that there has been some level of good to come out of this with this whole quarantine thing we have all been given time to reflect on our lives and to spend time with our families and to really think about what matters</div><div class="ln" style="left:14.2px;top:36.9px;width:21.5px">e doing well. This has been a bit of a scary time for all of us I mean if anyone would have told me something like this would happen a year ago I definitely would not have believed them. However I think that there has been some level of good to come out of this with this whole quarantine thing we have all been given time to reflect on our lives and to spend time with our families and to really think about what matters</div><div class="ln" style="left:14.2px;top:42.6px;width:32.0px"> well. This has been a bit of a scary time for all of us I mean if anyone would have told me something like this would happen a year ago I definitely would not have believed them. However I think that there has been some level of good to come out of this with this whole quarantine thing we have all been given time to reflect on our lives and to spend time with our families and to really think about what matters</div><div class="ln" style="left:14.2px;top:54.1px;width:12.0px">s been a bit of a scary time for all of us I mean if anyone would have told me something like this would happen a year ago I definitely would not have believed them. However I think that there has been some level of good to come out of this with this whole quarantine thing we have all been given time to reflect on our lives and to spend time with our families and to really think about what matters</div><div class="ln" style="left:14.2px;top:59.9px;width:29.5px">a bit of a scary time for all of us I mean if anyone would have told me something like this would happen a year ago I definitely would not have believed them. However I think that there has been some level of good to come out of this with this whole quarantine thing we have all been given time to reflect on our lives and to spend time with our families and to really think about what matters</div><div class="ln" style="left:14.2px;top:65.7px;width:21.5px">f a scary time for all of us I mean if anyone would have told me something like this would happen a year ago I definitely would not have believed them. However I think that there has been some level of good to come out of this with this whole quarantine thing we have all been given time to reflect on our lives and to spend time with our families and to really think about what matters</div><div class="ln" style="left:14.2px;top:71.4px;width:32.0px">ry time for all of us I mean if anyone would have told me something like this would happen a year ago I definitely would not have believed them. However I think that there has been some level of good to come out of this with this whole quarantine thing we have all been given time to reflect on our lives and to spend time with our families and to really think about what matters</div><div class="ln" style="left:14.2px;top:82.9px;width:20.5px">l of us I mean if anyone would have told me something like this would happen a year ago I definitely would not have believed them. However I think that there has been some level of good to come out of this with this whole quarantine thing we have all been given time to reflect on our lives and to spend time with our families and to really think about what matters</div><div class="ln" style="left:21.7px;top:94.4px;width:86.0px"> if anyone would have told me something like this would happen a year ago I definitely would not have believed them. However I think that there has been some level of good to come out of this with this whole quarantine thing we have all been given time to reflect on our lives and to spend time with our families and to really think about what matters</div><div class="ln" style="left:14.2px;top:100.2px;width:93.5px">one would have told me something like this would happen a year ago I definitely would not have believed them. However I think that there has been some level of good to come out of this with this whole quarantine thing we have all been given time to reflect on our lives and to spend time with our families and to really think about what matters</div><div class="ln" style="left:14.2px;top:105.9px;width:93.5px">ld have told me something like this would happen a year ago I definitely would not have believed them. However I think that there has been some level of good to come out of this with this whole quarantine thing we have all been given time to reflect on our lives and to spend time with our families and to really think about what matters</div><div class="ln" style="left:14.2px;top:111.7px;width:63.0px"> told me something like this would happen a year ago I definitely would not have believed them. However I think that there has been some level of good to come out of this with this whole quarantine thing we have all been given time to reflect on our lives and to spend time with our families and to really think about what matters</div><div class="ln" style="left:21.7px;top:117.4px;width:86.0px">e something like this would happen a year ago I definitely would not have believed them. However I think that there has been some level of good to come out of this with this whole quarantine thing we have all been given time to reflect on our lives and to spend time with our families and to really think about what matters</div><div class="ln" style="left:14.2px;top:123.2px;width:93.5px">hing like this would happen a year ago I definitely would not have believed them. However I think that there has been some level of good to come out of this with this whole quarantine thing we have all been given time to reflect on our lives and to spend time with our families and to really think about what matters</div><div class="ln" style="left:14.2px;top:128.9px;width:93.5px">ke this would happen a year ago I definitely would not have believed them. However I think that there has been some level of good to come out of this with this whole quarantine thing we have all been given time to reflect on our lives and to spend time with our families and to really think about what matters</div><div class="ln" style="left:14.2px;top:134.7px;width:29.0px"> would happen a year ago I definitely would not have believed them. However I think that there has been some level of good to come out of this with this whole quarantine thing we have all been given time to reflect on our lives and to spend time with our families and to really think about what matters</div></div>
<div class="t lbl" style="left:1037.3px;top:552.20px;width:210px"><span style="display:inline-block;width:9.6px;height:9.6px;border-radius:50%;background:#3b82f7;margin-right:5.5px;vertical-align:0.8px"></span>NHS Letter (Nathan)</div>
<div class="t sub" style="left:1037.3px;top:573.07px;width:210px">Today at 2:15 AM</div>
<div class="t sub" style="left:1037.3px;top:586.67px;width:210px">On My iPad</div>
<div class="thumb" style="left:427.8px;top:639.3px;width:123.4px;height:159px"><div class="ln" style="left:14.2px;top:13.9px;width:8.0px"> that you and your family are doing well. This has been a bit of a scary time for all of us I mean if anyone would have told me something like this would happen a year ago I definitely would not have believed them. However I think that there has been some level of good to come out of this with this whole quarantine thing we have all been given time to reflect on our lives and to spend time with our families and to really think about what matters</div><div class="ln" style="left:14.2px;top:19.6px;width:31.0px">ou and your family are doing well. This has been a bit of a scary time for all of us I mean if anyone would have told me something like this would happen a year ago I definitely would not have believed them. However I think that there has been some level of good to come out of this with this whole quarantine thing we have all been given time to reflect on our lives and to spend time with our families and to really think about what matters</div><div class="ln" style="left:14.2px;top:25.4px;width:55.0px">your family are doing well. This has been a bit of a scary time for all of us I mean if anyone would have told me something like this would happen a year ago I definitely would not have believed them. However I think that there has been some level of good to come out of this with this whole quarantine thing we have all been given time to reflect on our lives and to spend time with our families and to really think about what matters</div><div class="ln" style="left:14.2px;top:36.9px;width:42.5px">e doing well. This has been a bit of a scary time for all of us I mean if anyone would have told me something like this would happen a year ago I definitely would not have believed them. However I think that there has been some level of good to come out of this with this whole quarantine thing we have all been given time to reflect on our lives and to spend time with our families and to really think about what matters</div><div class="ln" style="left:21.7px;top:48.4px;width:86.5px">This has been a bit of a scary time for all of us I mean if anyone would have told me something like this would happen a year ago I definitely would not have believed them. However I think that there has been some level of good to come out of this with this whole quarantine thing we have all been given time to reflect on our lives and to spend time with our families and to really think about what matters</div><div class="ln" style="left:14.2px;top:54.1px;width:94.0px">s been a bit of a scary time for all of us I mean if anyone would have told me something like this would happen a year ago I definitely would not have believed them. However I think that there has been some level of good to come out of this with this whole quarantine thing we have all been given time to reflect on our lives and to spend time with our families and to really think about what matters</div><div class="ln" style="left:14.2px;top:59.9px;width:94.0px">a bit of a scary time for all of us I mean if anyone would have told me something like this would happen a year ago I definitely would not have believed them. However I think that there has been some level of good to come out of this with this whole quarantine thing we have all been given time to reflect on our lives and to spend time with our families and to really think about what matters</div><div class="ln" style="left:14.2px;top:65.7px;width:94.0px">f a scary time for all of us I mean if anyone would have told me something like this would happen a year ago I definitely would not have believed them. However I think that there has been some level of good to come out of this with this whole quarantine thing we have all been given time to reflect on our lives and to spend time with our families and to really think about what matters</div><div class="ln" style="left:14.2px;top:71.4px;width:94.0px">ry time for all of us I mean if anyone would have told me something like this would happen a year ago I definitely would not have believed them. However I think that there has been some level of good to come out of this with this whole quarantine thing we have all been given time to reflect on our lives and to spend time with our families and to really think about what matters</div><div class="ln" style="left:14.2px;top:77.2px;width:94.0px"> for all of us I mean if anyone would have told me something like this would happen a year ago I definitely would not have believed them. However I think that there has been some level of good to come out of this with this whole quarantine thing we have all been given time to reflect on our lives and to spend time with our families and to really think about what matters</div><div class="ln" style="left:14.2px;top:82.9px;width:63.5px">l of us I mean if anyone would have told me something like this would happen a year ago I definitely would not have believed them. However I think that there has been some level of good to come out of this with this whole quarantine thing we have all been given time to reflect on our lives and to spend time with our families and to really think about what matters</div><div class="ln" style="left:21.7px;top:88.7px;width:86.5px"> I mean if anyone would have told me something like this would happen a year ago I definitely would not have believed them. However I think that there has been some level of good to come out of this with this whole quarantine thing we have all been given time to reflect on our lives and to spend time with our families and to really think about what matters</div><div class="ln" style="left:14.2px;top:94.4px;width:94.0px"> if anyone would have told me something like this would happen a year ago I definitely would not have believed them. However I think that there has been some level of good to come out of this with this whole quarantine thing we have all been given time to reflect on our lives and to spend time with our families and to really think about what matters</div><div class="ln" style="left:14.2px;top:100.2px;width:94.0px">one would have told me something like this would happen a year ago I definitely would not have believed them. However I think that there has been some level of good to come out of this with this whole quarantine thing we have all been given time to reflect on our lives and to spend time with our families and to really think about what matters</div><div class="ln" style="left:14.2px;top:105.9px;width:94.0px">ld have told me something like this would happen a year ago I definitely would not have believed them. However I think that there has been some level of good to come out of this with this whole quarantine thing we have all been given time to reflect on our lives and to spend time with our families and to really think about what matters</div><div class="ln" style="left:14.2px;top:111.7px;width:94.0px"> told me something like this would happen a year ago I definitely would not have believed them. However I think that there has been some level of good to come out of this with this whole quarantine thing we have all been given time to reflect on our lives and to spend time with our families and to really think about what matters</div><div class="ln" style="left:14.2px;top:117.4px;width:94.0px">e something like this would happen a year ago I definitely would not have believed them. However I think that there has been some level of good to come out of this with this whole quarantine thing we have all been given time to reflect on our lives and to spend time with our families and to really think about what matters</div><div class="ln" style="left:14.2px;top:123.2px;width:94.0px">hing like this would happen a year ago I definitely would not have believed them. However I think that there has been some level of good to come out of this with this whole quarantine thing we have all been given time to reflect on our lives and to spend time with our families and to really think about what matters</div><div class="ln" style="left:14.2px;top:128.9px;width:94.0px">ke this would happen a year ago I definitely would not have believed them. However I think that there has been some level of good to come out of this with this whole quarantine thing we have all been given time to reflect on our lives and to spend time with our families and to really think about what matters</div><div class="ln" style="left:14.2px;top:134.7px;width:91.0px"> would happen a year ago I definitely would not have believed them. However I think that there has been some level of good to come out of this with this whole quarantine thing we have all been given time to reflect on our lives and to spend time with our families and to really think about what matters</div></div>
<div class="t lbl" style="left:384.5px;top:805.60px;width:210px"><span style="display:inline-block;width:9.6px;height:9.6px;border-radius:50%;background:#3b82f7;margin-right:5.5px;vertical-align:0.8px"></span>NHS letter (Police</div>
<div class="t lbl" style="left:384.5px;top:824.60px;width:210px">Department)</div>
<div class="t sub" style="left:384.5px;top:845.47px;width:210px">Today at 2:16 AM</div>
<div class="t sub" style="left:384.5px;top:859.07px;width:210px">On My iPad</div>
<div class="thumb" style="left:645.3px;top:639.3px;width:123.4px;height:159px"><div class="ln" style="left:14.2px;top:13.9px;width:10.0px">e that you and your family are doing well. This has been a bit of a scary time for all of us I mean if anyone would have told me something like this would happen a year ago I definitely would not have believed them. However I think that there has been some level of good to come out of this with this whole quarantine thing we have all been given time to reflect on our lives and to spend time with our families and to really think about what matters</div><div class="ln" style="left:14.2px;top:25.4px;width:9.5px"> your family are doing well. This has been a bit of a scary time for all of us I mean if anyone would have told me something like this would happen a year ago I definitely would not have believed them. However I think that there has been some level of good to come out of this with this whole quarantine thing we have all been given time to reflect on our lives and to spend time with our families and to really think about what matters</div><div class="ln" style="left:14.2px;top:31.1px;width:29.5px">amily are doing well. This has been a bit of a scary time for all of us I mean if anyone would have told me something like this would happen a year ago I definitely would not have believed them. However I think that there has been some level of good to come out of this with this whole quarantine thing we have all been given time to reflect on our lives and to spend time with our families and to really think about what matters</div><div class="ln" style="left:14.2px;top:36.9px;width:21.5px">re doing well. This has been a bit of a scary time for all of us I mean if anyone would have told me something like this would happen a year ago I definitely would not have believed them. However I think that there has been some level of good to come out of this with this whole quarantine thing we have all been given time to reflect on our lives and to spend time with our families and to really think about what matters</div><div class="ln" style="left:14.2px;top:42.6px;width:32.0px">g well. This has been a bit of a scary time for all of us I mean if anyone would have told me something like this would happen a year ago I definitely would not have believed them. However I think that there has been some level of good to come out of this with this whole quarantine thing we have all been given time to reflect on our lives and to spend time with our families and to really think about what matters</div><div class="ln" style="left:14.2px;top:54.1px;width:10.0px">as been a bit of a scary time for all of us I mean if anyone would have told me something like this would happen a year ago I definitely would not have believed them. However I think that there has been some level of good to come out of this with this whole quarantine thing we have all been given time to reflect on our lives and to spend time with our families and to really think about what matters</div><div class="ln" style="left:14.2px;top:59.9px;width:29.5px"> a bit of a scary time for all of us I mean if anyone would have told me something like this would happen a year ago I definitely would not have believed them. However I think that there has been some level of good to come out of this with this whole quarantine thing we have all been given time to reflect on our lives and to spend time with our families and to really think about what matters</div><div class="ln" style="left:14.2px;top:65.7px;width:21.5px">of a scary time for all of us I mean if anyone would have told me something like this would happen a year ago I definitely would not have believed them. However I think that there has been some level of good to come out of this with this whole quarantine thing we have all been given time to reflect on our lives and to spend time with our families and to really think about what matters</div><div class="ln" style="left:14.2px;top:71.4px;width:32.0px">ary time for all of us I mean if anyone would have told me something like this would happen a year ago I definitely would not have believed them. However I think that there has been some level of good to come out of this with this whole quarantine thing we have all been given time to reflect on our lives and to spend time with our families and to really think about what matters</div><div class="ln" style="left:14.2px;top:82.9px;width:16.0px">ll of us I mean if anyone would have told me something like this would happen a year ago I definitely would not have believed them. However I think that there has been some level of good to come out of this with this whole quarantine thing we have all been given time to reflect on our lives and to spend time with our families and to really think about what matters</div><div class="ln" style="left:21.7px;top:94.4px;width:86.0px">n if anyone would have told me something like this would happen a year ago I definitely would not have believed them. However I think that there has been some level of good to come out of this with this whole quarantine thing we have all been given time to reflect on our lives and to spend time with our families and to really think about what matters</div><div class="ln" style="left:14.2px;top:100.2px;width:93.5px">yone would have told me something like this would happen a year ago I definitely would not have believed them. However I think that there has been some level of good to come out of this with this whole quarantine thing we have all been given time to reflect on our lives and to spend time with our families and to really think about what matters</div><div class="ln" style="left:14.2px;top:105.9px;width:93.5px">uld have told me something like this would happen a year ago I definitely would not have believed them. However I think that there has been some level of good to come out of this with this whole quarantine thing we have all been given time to reflect on our lives and to spend time with our families and to really think about what matters</div><div class="ln" style="left:14.2px;top:111.7px;width:93.5px">e told me something like this would happen a year ago I definitely would not have believed them. However I think that there has been some level of good to come out of this with this whole quarantine thing we have all been given time to reflect on our lives and to spend time with our families and to really think about what matters</div><div class="ln" style="left:14.2px;top:117.4px;width:93.5px">me something like this would happen a year ago I definitely would not have believed them. However I think that there has been some level of good to come out of this with this whole quarantine thing we have all been given time to reflect on our lives and to spend time with our families and to really think about what matters</div><div class="ln" style="left:14.2px;top:123.2px;width:30.0px">thing like this would happen a year ago I definitely would not have believed them. However I think that there has been some level of good to come out of this with this whole quarantine thing we have all been given time to reflect on our lives and to spend time with our families and to really think about what matters</div><div class="ln" style="left:21.7px;top:128.9px;width:86.0px">ike this would happen a year ago I definitely would not have believed them. However I think that there has been some level of good to come out of this with this whole quarantine thing we have all been given time to reflect on our lives and to spend time with our families and to really think about what matters</div><div class="ln" style="left:14.2px;top:134.7px;width:91.5px">s would happen a year ago I definitely would not have believed them. However I think that there has been some level of good to come out of this with this whole quarantine thing we have all been given time to reflect on our lives and to spend time with our families and to really think about what matters</div></div>
<div class="t lbl" style="left:602.0px;top:805.60px;width:210px"><span style="display:inline-block;width:9.6px;height:9.6px;border-radius:50%;background:#3b82f7;margin-right:5.5px;vertical-align:0.8px"></span>NHS Letter (Zerby)</div>
<div class="t sub" style="left:602.0px;top:826.47px;width:210px">Today at 2:15 AM</div>
<div class="t sub" style="left:602.0px;top:840.07px;width:210px">On My iPad</div>
<div id="tabbar"></div>
<div style="left:379px;top:911px;width:24px;height:24px;border-radius:50%;background:#8e8e93"></div>
<div style="left:390px;top:915.5px;width:1.8px;height:8.6px;background:#151515"></div>
<div style="left:384.5px;top:922.3px;width:7.3px;height:1.8px;background:#151515"></div>
<div class="t" style="left:408.5px;top:917.70px;font-size:13px;letter-spacing:-0.35px;color:#8e8e93">Recents</div>
<div style="left:829.5px;top:913px;width:24px;height:21px"><svg width="23.6" height="21" viewBox="0 0 24 21" preserveAspectRatio="none"><path d="M0.3 1.3 Q0.3 0.1 1.5 0.1 L7.2 0.1 Q8 0.1 8.6 0.8 L9.6 2 L22.6 2 Q23.7 2 23.7 3.1 L23.7 4.6 L0.3 4.6 Z" fill="#3b82f0"/><path d="M0.3 5.4 L23.7 5.4 L23.7 19 Q23.7 20.1 22.6 20.1 L1.4 20.1 Q0.3 20.1 0.3 19 Z" fill="#3b82f0"/></svg></div>
<div class="t" style="left:859.5px;top:917.30px;font-size:13px;letter-spacing:-0.45px;color:#3b82f0">Browse</div>
<div style="left:479px;top:947.8px;width:322px;height:5px;border-radius:3px;background:#fff"></div>
</div></body></html>
